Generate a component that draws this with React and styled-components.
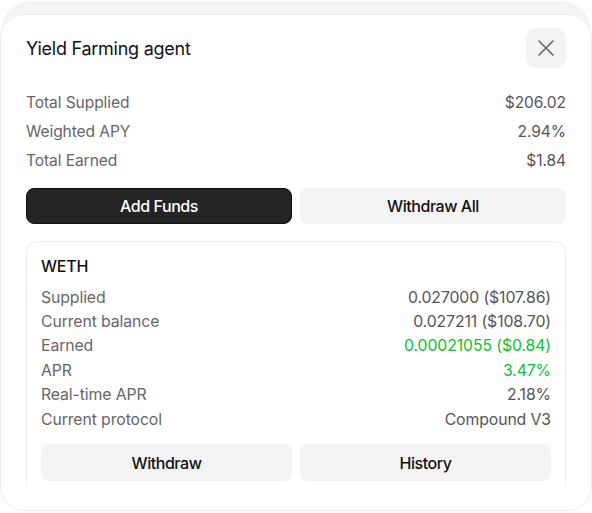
import styled, { createGlobalStyle } from 'styled-components';

const Global = createGlobalStyle`
    body {
        margin: 0;
        background: #ffffff;
        font-family: Inter, "Noto Sans", sans-serif;
    }
`;

const Page = styled.div`
    position: relative;
    width: 592px;
    height: 513px;
    padding-top: 14px;
    box-sizing: border-box;
`;

// the sheet peeking out behind the modal
const BackSheet = styled.div`
    position: absolute;
    top: 1px;
    left: 2px;
    right: 2px;
    height: 60px;
    background: #f4f4f4;
    border-radius: 28px;
`;

const Modal = styled.div`
    position: relative;
    height: 497px;
    box-sizing: border-box;
    background: #ffffff;
    border: 1px solid #ededed;
    border-radius: 24px;
    padding: 13px 25px 0;
    display: flex;
    flex-direction: column;
`;

const Header = styled.div`
    display: flex;
    align-items: center;
    justify-content: space-between;
    height: 40px;
    margin-bottom: 20px;
`;

const Title = styled.h1`
    margin: 0;
    font-size: 18px;
    font-weight: 400;
    color: #111;
    letter-spacing: -0.25px;
`;

const CloseButton = styled.button`
    width: 40px;
    height: 40px;
    border: none;
    border-radius: 10px;
    background: #f3f3f3;
    display: flex;
    align-items: center;
    justify-content: center;
    padding: 0;
    color: #666;
`;

const Stats = styled.div`
    display: flex;
    flex-direction: column;
`;

const Row = styled.div`
    display: flex;
    justify-content: space-between;
    align-items: center;
    height: ${p => p.$h || 29}px;
    font-size: ${p => p.$size || 15.6}px;
    color: #666;
    letter-spacing: -0.1px;
`;

const Value = styled.span`
    color: ${p => (p.$green ? '#0dbf2f' : '#555')};
`;

const ButtonRow = styled.div`
    display: grid;
    grid-template-columns: 1fr 1fr;
    gap: 8px;
    margin-top: ${p => p.$top || 0}px;
`;

const Button = styled.button`
    height: ${p => p.$h || 36}px;
    border-radius: 8px;
    border: ${p => (p.$dark ? '1px solid #111' : 'none')};
    background: ${p => (p.$dark ? '#242424' : '#f4f4f4')};
    color: ${p => (p.$dark ? '#fff' : '#111')};
    font-family: inherit;
    font-size: 16px;
    font-weight: 500;
    letter-spacing: -0.45px;
`;

const Scroll = styled.div`
    margin-top: 17px;
    height: 244px;
    overflow: hidden;
`;

const Card = styled.div`
    border: 1px solid #ececec;
    border-radius: 12px;
    padding: 14px 14px 16px;
`;

const Asset = styled.div`
    font-size: 16px;
    font-weight: 500;
    color: #111;
    line-height: 20px;
    letter-spacing: -0.2px;
    margin-bottom: 9px;
`;

const stats = [
    ['Total Supplied', '$206.02'],
    ['Weighted APY', '2.94%'],
    ['Total Earned', '$1.84'],
];

const weth = [
    ['Supplied', '0.027000 ($107.86)'],
    ['Current balance', '0.027211 ($108.70)'],
    ['Earned', '0.00021055 ($0.84)', true],
    ['APR', '3.47%', true],
    ['Real-time APR', '2.18%'],
    ['Current protocol', 'Compound V3'],
];

export default function App() {
    return (
        <Page>
            <Global />
            <BackSheet />
            <Modal>
                <Header>
                    <Title>Yield Farming agent</Title>
                    <CloseButton aria-label="Close">
                        <svg width="16" height="16" viewBox="0 0 16 16" fill="none" stroke="currentColor" strokeWidth="1.6" strokeLinecap="round">
                            <path d="M1 1L15 15M15 1L1 15" />
                        </svg>
                    </CloseButton>
                </Header>
                <Stats>
                    {stats.map(([label, value]) => (
                        <Row key={label}>
                            <span>{label}</span>
                            <Value>{value}</Value>
                        </Row>
                    ))}
                </Stats>
                <ButtonRow $top={13}>
                    <Button $dark>Add Funds</Button>
                    <Button>Withdraw All</Button>
                </ButtonRow>
                <Scroll>
                    <Card>
                        <Asset>WETH</Asset>
                        {weth.map(([label, value, green]) => (
                            <Row key={label} $h={24.4} $size={15.8}>
                                <span>{label}</span>
                                <Value $green={green}>{value}</Value>
                            </Row>
                        ))}
                        <ButtonRow $top={13}>
                            <Button $h={37}>Withdraw</Button>
                            <Button $h={37}>History</Button>
                        </ButtonRow>
                    </Card>
                </Scroll>
            </Modal>
        </Page>
    );
}
